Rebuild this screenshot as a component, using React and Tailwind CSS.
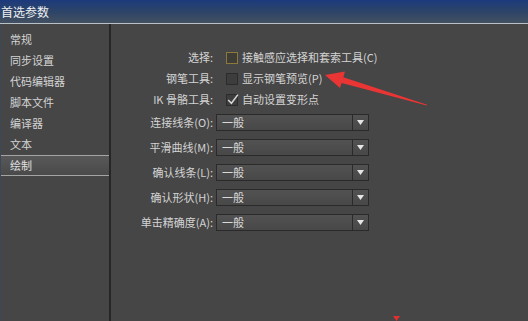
const NAV = ['常规', '同步设置', '代码编辑器', '脚本文件', '编译器', '文本', '绘制']

const CHECKS = [
  { label: '选择:', text: '接触感应选择和套索工具(C)', checked: false, focus: true },
  { label: '钢笔工具:', text: '显示钢笔预览(P)', checked: false },
  { label: 'IK 骨骼工具:', text: '自动设置变形点', checked: true },
]

const SELECTS = ['连接线条(O):', '平滑曲线(M):', '确认线条(L):', '确认形状(H):', '单击精确度(A):']

function Checkbox({ checked, focus }) {
  return (
    <div
      className={
        'relative w-[12px] h-[12px] border ' +
        (focus ? 'border-[#8c7a3c] bg-[#3e3d38]' : 'border-[#2c2c2c] bg-[#3d3d3d]')
      }
    >
      {checked && (
        <svg viewBox="0 0 12 12" className="absolute -left-[1px] -top-[2px] w-[13px] h-[13px]">
          <path d="M2 6.5 L5 9.5 L11 1.5" fill="none" stroke="#d8d8d8" strokeWidth="1.4" />
        </svg>
      )}
    </div>
  )
}

export default function App() {
  return (
    <div
      className="relative w-[528px] h-[321px] overflow-hidden bg-[#464646] text-[11px] text-[#d4d4d4]"
      style={{ fontFamily: '"Noto Sans CJK SC", "Noto Sans", sans-serif' }}
    >
      <div className="h-[24px] bg-gradient-to-b from-[#1c3a7c] via-[#2d4468] to-[#435060] border-b border-[#b8c0c8] flex items-center pl-[1px]">
        <span className="text-[12px] text-[#f0f0f0] leading-none">首选参数</span>
      </div>

      <div className="flex h-[297px]">
        <div className="w-[111px] border-r-2 border-[#262626] pt-[5px] border-l border-l-[#3c4858]">
          {NAV.map(n => (
            <div
              key={n}
              className={
                'h-[21px] flex items-center pl-[9px] leading-none ' +
                (n === '绘制'
                  ? 'border-y border-[#a4a4a4] bg-gradient-to-b from-[#585858] to-[#4a4a4a] text-[#e0e0e0]'
                  : '')
              }
            >
              {n}
            </div>
          ))}
        </div>

        <div className="flex-1 pt-[23px]">
          {CHECKS.map(c => (
            <div key={c.label} className="h-[21px] flex items-center">
              <div className="w-[102px] text-right leading-none">{c.label}</div>
              <div className="ml-[13px]">
                <Checkbox checked={c.checked} focus={c.focus} />
              </div>
              <span className="ml-[4px] leading-none">{c.text}</span>
            </div>
          ))}

          {SELECTS.map(s => (
            <div key={s} className="h-[25px] flex items-center">
              <div className="w-[102px] text-right leading-none">{s}</div>
              <div className="ml-[3px] w-[153px] h-[17px] flex border border-[#2a2a2a] bg-gradient-to-b from-[#525252] to-[#484848]">
                <span className="flex-1 pl-[5px] leading-[15px] text-[#d8d8d8]">一般</span>
                <div className="w-[16px] border-l border-[#2a2a2a] flex items-center justify-center">
                  <svg viewBox="0 0 7 5" className="w-[7px] h-[5px]">
                    <path d="M0 0 H7 L3.5 5 Z" fill="#e6e6e6" />
                  </svg>
                </div>
              </div>
            </div>
          ))}
        </div>
      </div>

      <svg className="absolute left-0 top-0 w-[528px] h-[321px] pointer-events-none" viewBox="0 0 528 321">
        <polygon
          points="325,75 345,71.5 343.3,77.3 427.2,104.8 426.8,105.4 341.6,82.9 340,88"
          fill="#ea3535"
        />
        <polygon points="393,316 400,316 396.5,321" fill="#e03030" />
      </svg>
    </div>
  )
}
